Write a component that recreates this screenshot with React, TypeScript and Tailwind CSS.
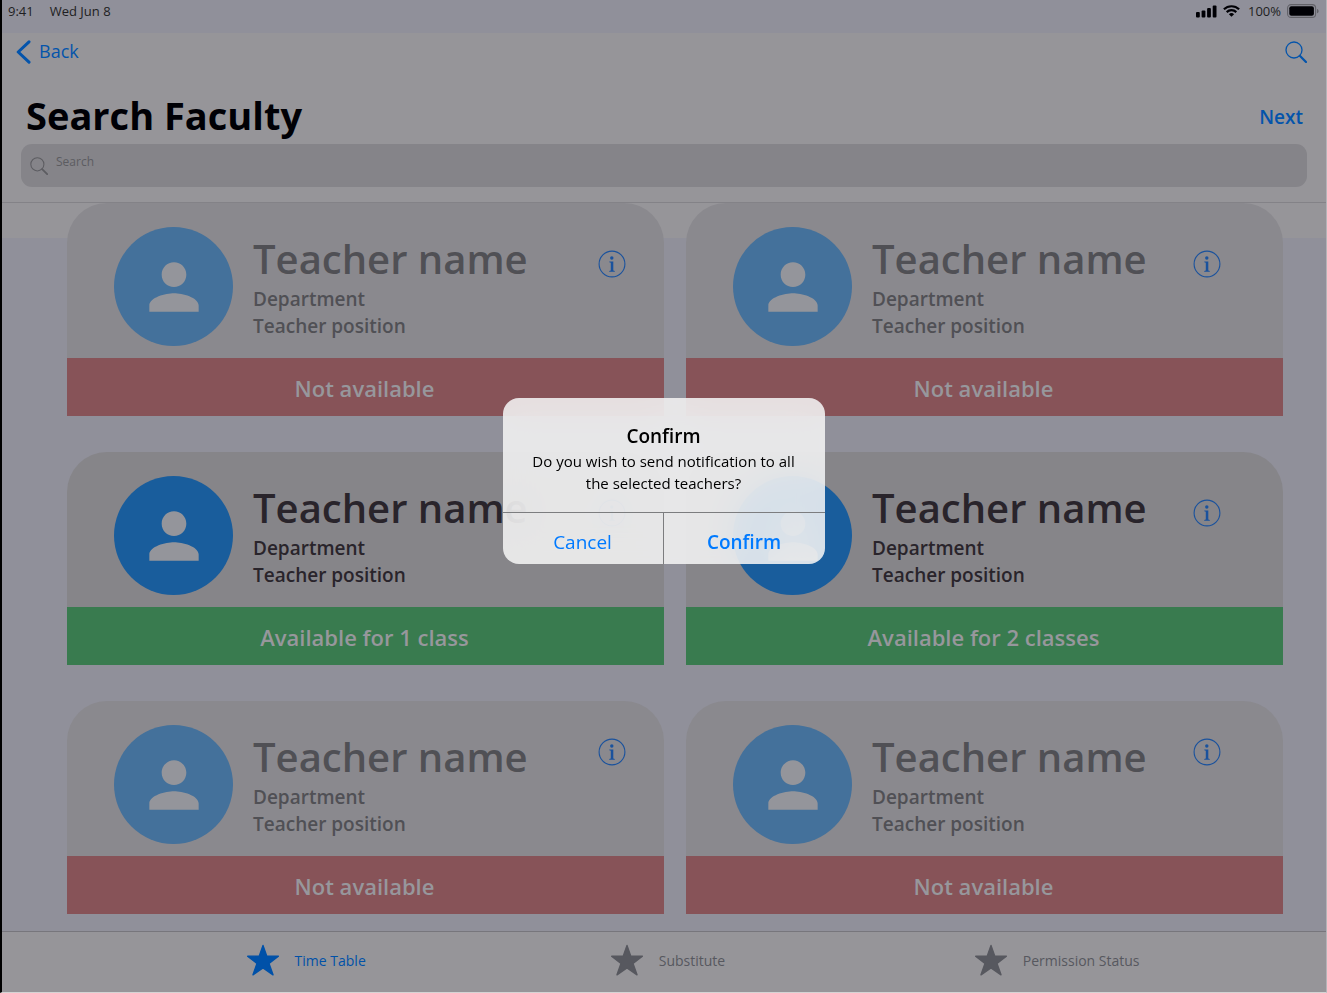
import React from "react";

type Teacher = {
  id: number;
  name: string;
  department: string;
  position: string;
  classes: number;
};

const base = { name: "Teacher name", department: "Department", position: "Teacher position" };

const teachers: Teacher[] = [
  { id: 1, ...base, classes: 0 },
  { id: 2, ...base, classes: 0 },
  { id: 3, ...base, classes: 1 },
  { id: 4, ...base, classes: 2 },
  { id: 5, ...base, classes: 0 },
  { id: 6, ...base, classes: 0 },
];

function availability(classes: number) {
  if (classes === 0) return "Not available";
  return `Available for ${classes} ${classes === 1 ? "class" : "classes"}`;
}

function SearchIcon({ className }: { className: string }) {
  return (
    <svg viewBox="0 0 22 22" fill="none" stroke="currentColor" className={className} aria-hidden="true">
      <circle cx="9" cy="9" r="8" strokeWidth="1.3" />
      <path d="M14.8 14.8 21 21" strokeWidth="2.2" strokeLinecap="round" />
    </svg>
  );
}

function InfoIcon() {
  return (
    <svg viewBox="0 0 28 28" className="size-7" aria-hidden="true">
      <circle cx="14" cy="14" r="12.9" fill="none" stroke="currentColor" strokeWidth="1.1" />
      <circle cx="13.8" cy="8" r="1.7" fill="currentColor" />
      <path d="M11.3 11.4h4v9.1l1.5.4v.8h-5.6v-.8l1.6-.4v-7.8l-1.5-.5z" fill="currentColor" />
    </svg>
  );
}

function StarIcon() {
  return (
    <svg viewBox="0 0 34 32" className="h-8 w-[34px]" fill="currentColor" stroke="currentColor" strokeWidth="1.4" strokeLinejoin="round" aria-hidden="true">
      <path d="M17 1.4 20.7 12.1 32.4 12.3 23 19.4 27 30.8 17 24 7 30.8 11 19.4 1.6 12.3 13.3 12.1z" />
    </svg>
  );
}

function PersonIcon() {
  return (
    <svg viewBox="0 0 24 24" className="size-[74px]" fill="currentColor" aria-hidden="true">
      <path d="M12 12c2.21 0 4-1.79 4-4s-1.79-4-4-4-4 1.79-4 4 1.79 4 4 4zm0 2c-2.67 0-8 1.34-8 4v2h16v-2c0-2.66-5.33-4-8-4z" />
    </svg>
  );
}

function StatusBar() {
  return (
    <div className="flex h-[33px] items-start justify-between bg-[#90909a] pr-[7px] pl-[6px] text-[13px] leading-[22px] text-[#1e1e22]">
      <div className="flex gap-4">
        <span>9:41</span>
        <span>Wed Jun 8</span>
      </div>
      <div className="flex items-center gap-[6px]">
        <svg viewBox="0 0 21 13" className="h-[13px] w-[21px]" fill="#000005" aria-hidden="true">
          <rect x="0" y="7" width="3.8" height="5.5" rx="1" />
          <rect x="5.6" y="5.5" width="3.8" height="7" rx="1" />
          <rect x="11.1" y="3" width="3.8" height="9.5" rx="1" />
          <rect x="16.7" y="0.5" width="3.8" height="12" rx="1" />
        </svg>
        <svg viewBox="0 0 17 12" className="h-3 w-[17px]" fill="none" stroke="#000005" strokeWidth="2.2" aria-hidden="true">
          <path d="M.9 4.3a11 11 0 0 1 15.2 0" />
          <path d="M3.7 7.1a7 7 0 0 1 9.6 0" />
          <path d="M8.5 11.8 5.9 9.2a3.8 3.8 0 0 1 5.2 0z" fill="#000005" stroke="none" />
        </svg>
        <span className="pl-[2px]">100%</span>
        <svg viewBox="0 0 32 14" className="h-[14px] w-8" aria-hidden="true">
          <rect x=".6" y=".6" width="28" height="12.8" rx="3.5" fill="none" stroke="#626268" strokeWidth="1.1" />
          <rect x="2.3" y="2.3" width="24.6" height="9.4" rx="2" fill="#000005" />
          <path d="M30 5v4.3c1-.3 1.6-1.2 1.6-2.1S31 5.3 30 5z" fill="#626268" />
        </svg>
      </div>
    </div>
  );
}

function TeacherCard({ teacher, index }: { teacher: Teacher; index: number }) {
  const free = teacher.classes > 0;
  const infoColumn = index % 2 === 0 ? "right-[38px]" : "right-[62px]";
  const infoRow = index < 4 ? "top-[47px]" : "top-[37px]";
  return (
    <li className="relative">
      <div
        className={`flex h-[155px] rounded-t-[40px] pt-6 pl-[47px] ${
          free ? "bg-[#868589] text-[#29242b]" : "bg-[#8a898e] text-[#505055]"
        }`}
      >
        <div
          className={`flex size-[119px] shrink-0 items-center justify-center rounded-full text-[#94959b] ${
            free ? "bg-[#195d9c]" : "bg-[#44719b]"
          }`}
        >
          <PersonIcon />
        </div>
        <div className="min-w-0 pt-[5px] pl-5">
          <h2 className="text-[40px] leading-[54px] font-semibold whitespace-nowrap">{teacher.name}</h2>
          <p className="text-[19px] leading-[27px] font-semibold">{teacher.department}</p>
          <p className="text-[19px] leading-[27px] font-semibold">{teacher.position}</p>
        </div>
        <button type="button" aria-label="Teacher details" className={`absolute text-[#1a529d] ${infoColumn} ${infoRow}`}>
          <InfoIcon />
        </button>
      </div>
      <p
        className={`flex h-[58px] items-center justify-center pt-[2px] pr-[2px] text-[22px] font-semibold text-[#97979c] ${
          free ? "bg-[#397b4f]" : "bg-[#875358]"
        }`}
      >
        {availability(teacher.classes)}
      </p>
    </li>
  );
}

function Tab({ label, active, className = "" }: { label: string; active?: boolean; className?: string }) {
  return (
    <a
      href="#"
      className={`flex items-center gap-[15px] pb-1 text-[14px] ${active ? "text-[#0051a8]" : "text-[#57585f]"} ${className}`}
    >
      <StarIcon />
      <span>{label}</span>
    </a>
  );
}

function ConfirmDialog() {
  return (
    <div className="fixed inset-0 flex items-center justify-center pb-8">
      <div
        role="dialog"
        aria-modal="true"
        aria-labelledby="confirm-title"
        className="relative w-[322px] overflow-hidden rounded-[16px] text-center text-black"
      >
        <div className="absolute inset-0 opacity-70 backdrop-blur-lg" />
        <div className="relative bg-[#f7f7f7]/85">
          <div className="px-6 pt-[26px] pb-[18px]">
            <h2 id="confirm-title" className="text-[19px] leading-6 font-semibold">
              Confirm
            </h2>
            <p className="pt-[2px] text-[15px] leading-[22px] whitespace-nowrap">
              Do you wish to send notification to all
              <br />
              the selected teachers?
            </p>
          </div>
          <div className="grid grid-cols-2 border-t border-[#7c7d7f] text-[19px] text-[#007aff]">
            <button type="button" className="border-r border-[#7c7d7f] pt-[7px] leading-[44px]">
              Cancel
            </button>
            <button type="button" className="pt-[7px] leading-[44px] font-semibold">
              Confirm
            </button>
          </div>
        </div>
      </div>
    </div>
  );
}

export default function App() {
  return (
    <div className="flex min-h-screen flex-col border-r border-b border-l-2 border-r-[#b4b4b8] border-b-[#d4d4d4] border-l-black bg-[#90909a] font-['Open_Sans','Noto_Sans',sans-serif]">
      <StatusBar />
      <header className="border-b border-[#838287] bg-[#969599] pr-[19px] pb-[15px] pl-[19px]">
        <div className="flex h-[37px] items-center justify-between text-[#0454ab]">
          <a href="#" className="-ml-[5px] flex items-center gap-2 text-[18px]">
            <svg viewBox="0 0 15 24" className="h-6 w-[15px]" fill="none" stroke="currentColor" strokeWidth="3" strokeLinecap="round" strokeLinejoin="round" aria-hidden="true">
              <path d="M13 1.8 2.2 12 13 22.2" />
            </svg>
            Back
          </a>
          <button type="button" aria-label="Search">
            <SearchIcon className="size-[22px]" />
          </button>
        </div>
        <div className="flex h-[74px] items-end justify-between pr-1 pb-[2px] pl-[5px]">
          <h1 className="text-[38px] leading-[54px] font-bold text-[#000005]">Search Faculty</h1>
          <a href="#" className="pb-[11px] text-[19px] font-semibold text-[#0454ab]">
            Next
          </a>
        </div>
        <label className="flex h-[43px] items-center gap-2 rounded-[11px] bg-[#858489] pl-[9px] text-[#5c5c61]">
          <SearchIcon className="size-[18px] shrink-0" />
          <input
            type="search"
            aria-label="Search faculty"
            placeholder="Search"
            className="h-[43px] w-full min-w-0 bg-transparent pb-2 text-[12px] outline-none placeholder:text-[#5c5c61]"
          />
        </label>
      </header>
      <main className="flex-1 bg-[linear-gradient(#969599_35px,#90909a_35px)] pr-[43px] pb-[17px] pl-[65px]">
        <ul className="grid grid-cols-2 gap-x-[22px] gap-y-9">
          {teachers.map((teacher, index) => (
            <TeacherCard key={teacher.id} teacher={teacher} index={index} />
          ))}
        </ul>
      </main>
      <nav className="grid h-[61px] grid-cols-[18.4%_27.5%_27.5%_1fr] border-t border-[#77767c] bg-[#969599]">
        <Tab label="Time Table" active className="col-start-2" />
        <Tab label="Substitute" />
        <Tab label="Permission Status" />
      </nav>
      <ConfirmDialog />
    </div>
  );
}
